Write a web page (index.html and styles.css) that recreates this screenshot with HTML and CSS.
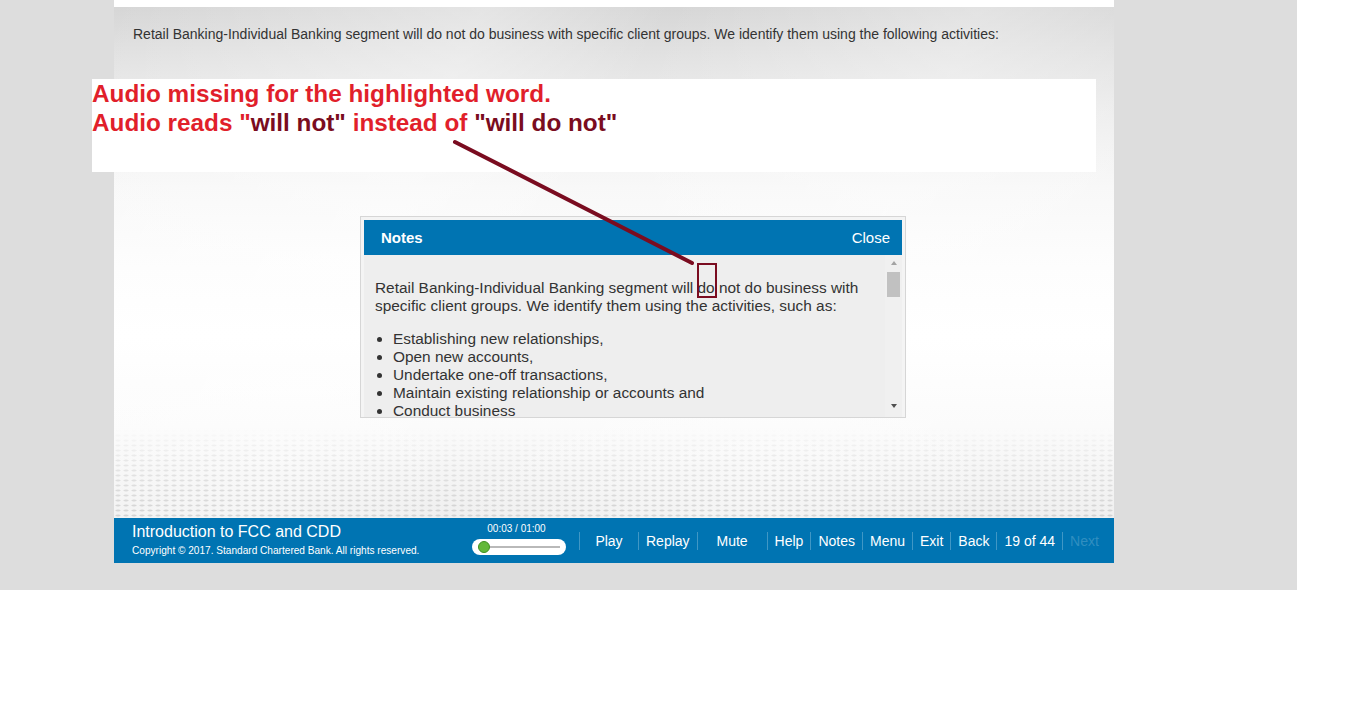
FILE: index.html
```html
<!DOCTYPE html>
<html lang="en">
<head>
<meta charset="utf-8">
<title>Introduction to FCC and CDD</title>
<link rel="stylesheet" href="styles.css">
</head>
<body>
<div class="viewport">
  <div class="stage">
    <div class="stage-content">
      <p class="intro">Retail Banking-Individual Banking segment will do not do business with specific client groups. We identify them using the following activities:</p>
      <div class="notes">
        <div class="notes-header">
          <span class="notes-title">Notes</span>
          <span class="notes-close">Close</span>
        </div>
        <div class="notes-body">
          <div class="notes-text">
            <p>Retail Banking-Individual Banking segment will do not do business with specific client groups. We identify them using the activities, such as:</p>
            <ul>
              <li>Establishing new relationships,</li>
              <li>Open new accounts,</li>
              <li>Undertake one-off transactions,</li>
              <li>Maintain existing relationship or accounts and</li>
              <li>Conduct business</li>
            </ul>
          </div>
          <div class="scrollbar">
            <span class="arrow-up"></span>
            <span class="thumb"></span>
            <span class="track"></span>
            <span class="arrow-down"></span>
          </div>
        </div>
      </div>
    </div>
    <div class="footer">
      <div class="course-info">
        <div class="course-title">Introduction to FCC and CDD</div>
        <div class="copyright">Copyright © 2017. Standard Chartered Bank. All rights reserved.</div>
      </div>
      <div class="player">
        <div class="time">00:03 / 01:00</div>
        <div class="slider"><span class="knob"></span><span class="rail"></span></div>
      </div>
      <nav class="nav">
        <span class="btn btn-play">Play</span>
        <span class="btn">Replay</span>
        <span class="btn btn-mute">Mute</span>
        <span class="btn">Help</span>
        <span class="btn">Notes</span>
        <span class="btn">Menu</span>
        <span class="btn">Exit</span>
        <span class="btn">Back</span>
        <span class="btn">19 of 44</span>
        <span class="btn btn-disabled">Next</span>
      </nav>
    </div>
  </div>
</div>

<div class="annotation">
  <div>Audio missing for the highlighted word.</div>
  <div>Audio reads "<span class="dark">will not"</span> instead of <span class="dark">"will do not"</span></div>
</div>

<svg class="markup" width="1370" height="728" viewBox="0 0 1370 728" aria-hidden="true">
  <line x1="455" y1="142" x2="692" y2="263" stroke="#7a0c20" stroke-width="4" stroke-linecap="round"/>
  <rect x="698" y="264" width="18" height="33" fill="none" stroke="#7a0c20" stroke-width="2"/>
</svg>
</body>
</html>
```

FILE: styles.css
```css
html, body {
  margin: 0;
  padding: 0;
  background: #ffffff;
}

body {
  font-family: "Liberation Sans", Arial, sans-serif;
  position: relative;
  width: 1370px;
  height: 728px;
  overflow: hidden;
}

.viewport {
  width: 1297px;
  height: 590px;
  background: #dddddd;
  padding-left: 114px;
  box-sizing: border-box;
}

.stage {
  width: 1000px;
  height: 563px;
  border-top: 7px solid #ffffff;
  box-sizing: border-box;
  display: flex;
  flex-direction: column;
}

.stage-content {
  flex: 1;
  position: relative;
  padding: 19px 19px 0 19px;
  background:
    linear-gradient(115deg, rgba(255,255,255,0) 0%, rgba(255,255,255,0.35) 30%, rgba(255,255,255,0) 45%, rgba(255,255,255,0.3) 70%, rgba(255,255,255,0) 90%),
    linear-gradient(to bottom, #d6d6d6 0px, #e2e2e2 50px, #eeeeee 110px, #f8f8f8 180px, #fdfdfd 260px, #ffffff 330px, #fbfbfb 420px, #efefef 511px);
  overflow: hidden;
}

.stage-content::after {
  content: "";
  position: absolute;
  left: 0;
  right: 0;
  bottom: 0;
  height: 90px;
  background: radial-gradient(ellipse 3.2px 1.3px at 50% 50%, #bdbdbd 50%, rgba(200,200,200,0) 100%) 0 0 / 8px 5px;
  -webkit-mask-image: linear-gradient(to bottom, rgba(0,0,0,0) 0%, rgba(0,0,0,0.3) 40%, rgba(0,0,0,0.6) 100%);
  mask-image: linear-gradient(to bottom, rgba(0,0,0,0) 0%, rgba(0,0,0,0.3) 40%, rgba(0,0,0,0.6) 100%);
  pointer-events: none;
}

.intro {
  margin: 0;
  font-size: 14px;
  line-height: 16px;
  color: #333333;
}

.notes {
  position: relative;
  z-index: 1;
  width: 546px;
  height: 202px;
  margin-top: 174px;
  margin-left: 227px;
  box-sizing: border-box;
  border: 1px solid #d6d6d6;
  background: #f4f4f4;
  padding: 3px 3px 0 3px;
  display: flex;
  flex-direction: column;
}

.notes-header {
  height: 35px;
  background: #0074b2;
  color: #ffffff;
  display: flex;
  align-items: center;
  justify-content: space-between;
  padding: 0 12px 0 17px;
  font-size: 15px;
  flex: none;
}

.notes-title {
  font-weight: bold;
}

.notes-body {
  flex: 1;
  min-height: 0;
  background: #eeeeee;
  display: flex;
}

.notes-text {
  flex: 1;
  overflow: hidden;
  padding: 24px 10px 0 11px;
  font-size: 15.4px;
  line-height: 18px;
  color: #333333;
}

.notes-text p {
  margin: 0 0 15px 0;
}

.notes-text ul {
  margin: 0;
  padding-left: 18px;
}

.scrollbar {
  width: 17px;
  flex: none;
  background: #f0f0f0;
  display: flex;
  flex-direction: column;
  align-items: center;
  padding: 6px 0 9px 0;
  box-sizing: border-box;
}

.arrow-up,
.arrow-down {
  width: 0;
  height: 0;
  border-left: 3.5px solid transparent;
  border-right: 3.5px solid transparent;
  flex: none;
}

.arrow-up {
  border-bottom: 4px solid #a3a3a3;
}

.arrow-down {
  border-top: 4px solid #505050;
}

.thumb {
  width: 13px;
  height: 25px;
  margin-top: 7px;
  background: #c1c1c1;
  flex: none;
}

.track {
  flex: 1;
}

.footer {
  height: 45px;
  flex: none;
  background: #0074b2;
  color: #ffffff;
  display: flex;
  align-items: stretch;
}

.course-info {
  width: 358px;
  flex: none;
  box-sizing: border-box;
  padding: 5px 0 0 18px;
}

.course-title {
  font-size: 16px;
  line-height: 18px;
}

.copyright {
  font-size: 10.1px;
  line-height: 12px;
  margin-top: 4px;
}

.player {
  width: 94px;
  flex: none;
  margin-right: 13px;
  display: flex;
  flex-direction: column;
  align-items: center;
  padding-top: 5px;
  box-sizing: border-box;
}

.time {
  font-size: 10px;
  line-height: 12px;
  margin-left: -5px;
}

.slider {
  margin-top: 4px;
  width: 94px;
  height: 16px;
  border-radius: 8px;
  background: #ffffff;
  display: flex;
  align-items: center;
  padding: 0 6px 0 6px;
  box-sizing: border-box;
}

.knob {
  width: 10px;
  height: 10px;
  border-radius: 50%;
  background: #63b83a;
  border: 1px solid #3e8f1f;
  flex: none;
}

.rail {
  flex: 1;
  height: 2px;
  background: #b9b9b9;
}

.nav {
  display: flex;
  align-items: center;
  font-size: 14px;
  flex: 1;
}

.btn {
  height: 18px;
  line-height: 18px;
  padding: 0 7px;
  border-left: 1px solid rgba(255,255,255,0.25);
  text-align: center;
  white-space: nowrap;
}

.btn-play {
  width: 59px;
  box-sizing: border-box;
  padding: 0;
}

.btn-mute {
  width: 70px;
  box-sizing: border-box;
  padding: 0;
}

.btn-disabled {
  color: rgba(255,255,255,0.2);
}

.annotation {
  position: absolute;
  z-index: 2;
  left: 92px;
  top: 79px;
  width: 1004px;
  height: 93px;
  background: #ffffff;
  color: #e11f2b;
  font-size: 24.3px;
  line-height: 29px;
  font-weight: bold;
}

.annotation .dark {
  color: #7a0c20;
}

.markup {
  position: absolute;
  z-index: 3;
  left: 0;
  top: 0;
  pointer-events: none;
}
```
